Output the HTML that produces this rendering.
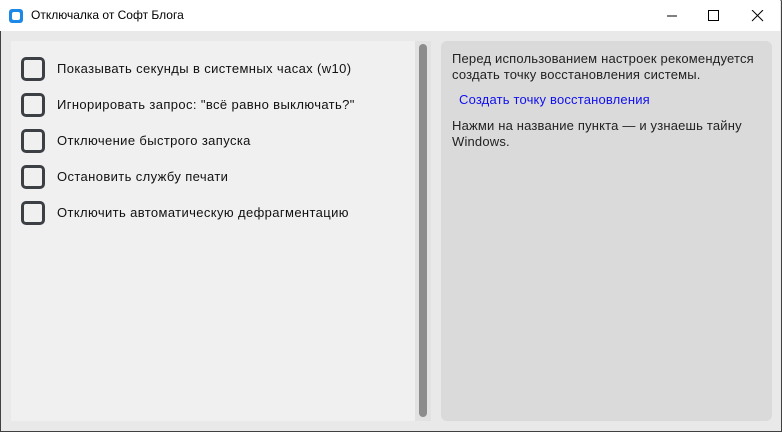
<!DOCTYPE html><html><head><meta charset="utf-8"><style>
*{margin:0;padding:0;box-sizing:border-box}
body{width:782px;height:432px;overflow:hidden;background:#e9e9e9;font-family:"Liberation Sans",sans-serif;position:relative}
.win{position:absolute;left:0;top:0;width:782px;height:432px;border:1px solid #404040;border-top-color:#9a9a9a}
.title{position:absolute;left:0;top:0;width:780px;height:31px;background:#fff}
.icon{position:absolute;left:9px;top:9px;width:14px;height:14px;background:#1e88e5;border-radius:3px}
.icon:after{content:"";position:absolute;left:3px;top:3px;width:8px;height:8px;background:#fff;border-radius:2px}
.ttl{position:absolute;left:31px;top:8px;font-size:12px;color:#000}
.left{position:absolute;left:11px;top:41px;width:404px;height:380px;background:#f0f0f0}
.track{position:absolute;left:415px;top:41px;width:16px;height:380px;background:#e2e2e2}
.thumb{position:absolute;left:419px;top:44px;width:8px;height:373px;background:#8c8c8c;border-radius:4px}
.right{position:absolute;left:441px;top:41px;width:331px;height:380px;background:#dadada;border-radius:6px}
.row{position:absolute;left:21px;height:24px;font-size:13px;color:#111;letter-spacing:0.38px}
.cb{position:absolute;left:0;top:0;width:24px;height:24px;border:3px solid #3c4045;border-radius:5px}
.row span{position:absolute;left:36px;top:4px;white-space:nowrap}
.p{position:absolute;left:452px;font-size:13px;color:#222;line-height:16px;letter-spacing:0.18px}
</style></head><body>
<div class="win"></div>
<div class="title"><div class="icon"></div><div class="ttl">Отключалка от Софт Блога</div>
<svg style="position:absolute;left:660px;top:10px" width="110" height="12">
<line x1="7" y1="6" x2="17" y2="6" stroke="#000" stroke-width="1"/>
<rect x="48.5" y="0.5" width="10" height="10" fill="none" stroke="#000"/>
<line x1="92" y1="0" x2="103" y2="11" stroke="#000"/><line x1="103" y1="0" x2="92" y2="11" stroke="#000"/>
</svg></div>
<div class="left"></div><div class="track"></div><div class="thumb"></div><div class="right"></div>
<div class="row" style="top:57px"><div class="cb"></div><span>Показывать секунды в системных часах (w10)</span></div>
<div class="row" style="top:93px"><div class="cb"></div><span>Игнорировать запрос: "всё равно выключать?"</span></div>
<div class="row" style="top:129px"><div class="cb"></div><span>Отключение быстрого запуска</span></div>
<div class="row" style="top:165px"><div class="cb"></div><span>Остановить службу печати</span></div>
<div class="row" style="top:201px"><div class="cb"></div><span>Отключить автоматическую дефрагментацию</span></div>
<div class="p" style="top:51px">Перед использованием настроек рекомендуется<br>создать точку восстановления системы.</div>
<div class="p" style="top:92px;left:459px;color:#1010ee">Создать точку восстановления</div>
<div class="p" style="top:118px">Нажми на название пункта — и узнаешь тайну<br>Windows.</div>
</body></html>
